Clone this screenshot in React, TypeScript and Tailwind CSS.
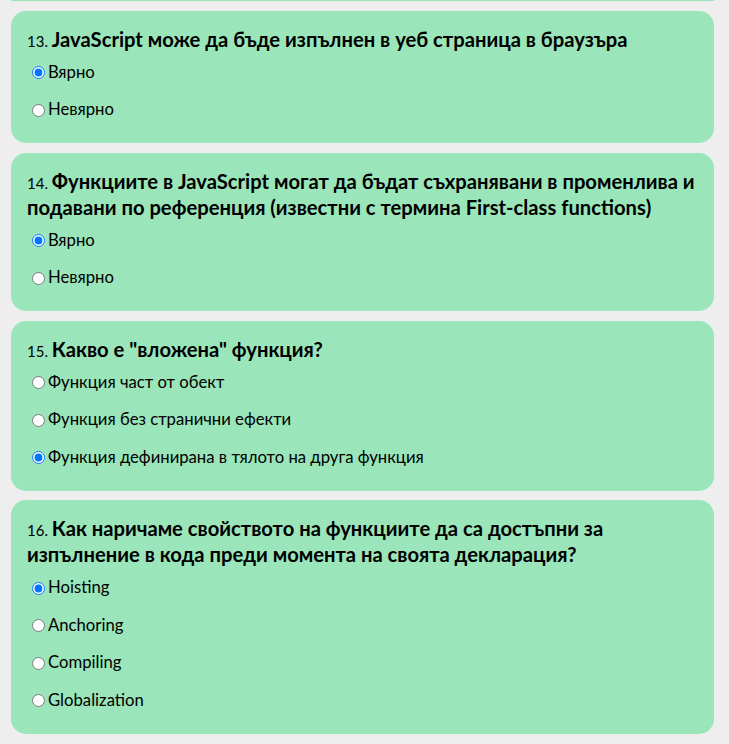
const questions = [
  {
    n: 13,
    title: <>JavaScript може да бъде изпълнен в уеб страница в браузъра</>,
    options: ["Вярно", "Невярно"],
    checked: 0,
  },
  {
    n: 14,
    title: (
      <>
        Функциите в JavaScript могат да бъдат съхранявани в променлива и подавани по референция (известни с термина First-class functions)
      </>
    ),
    options: ["Вярно", "Невярно"],
    checked: 0,
  },
  {
    n: 15,
    title: <>Какво е "вложена" функция?</>,
    options: [
      "Функция част от обект",
      "Функция без странични ефекти",
      "Функция дефинирана в тялото на друга функция",
    ],
    checked: 2,
  },
  {
    n: 16,
    title: (
      <>
        Как наричаме свойството на функциите да са достъпни за
        <br />
        изпълнение в кода преди момента на своята декларация?
      </>
    ),
    options: ["Hoisting", "Anchoring", "Compiling", "Globalization"],
    checked: 0,
  },
];

export default function App() {
  return (
    <div className="min-h-[744px] bg-[#eeeeee] font-['Lato','Roboto',sans-serif] text-black">
      <div className="flex flex-col gap-[9.5px]">
        {/* tail of the previous question card */}
        <div className="ml-[11px] mr-[15px] h-[1px] rounded-b-[15px] bg-[#9ae5b9]" />

        {questions.map((q) => (
          <div
            key={q.n}
            className="ml-[11px] mr-[15px] rounded-[15px] bg-[#9ae5b9] pl-4 pr-3 pt-[15px] pb-[21px]"
          >
            <h3 className="text-[20.2px] font-bold leading-[26px]">
              <span className="text-[15px] leading-none font-normal">{q.n}. </span>
              {q.title}
            </h3>
            <div className="mt-[9px] flex flex-col gap-[13.5px]">
              {q.options.map((opt, i) => (
                <label key={i} className="flex h-6 items-center text-[16.7px]">
                  <input
                    type="radio"
                    name={"q" + q.n}
                    defaultChecked={i === q.checked}
                    className="ml-[5px] mr-[3px] h-[13px] w-[13px]"
                  />
                  {opt}
                </label>
              ))}
            </div>
          </div>
        ))}
      </div>
    </div>
  );
}
